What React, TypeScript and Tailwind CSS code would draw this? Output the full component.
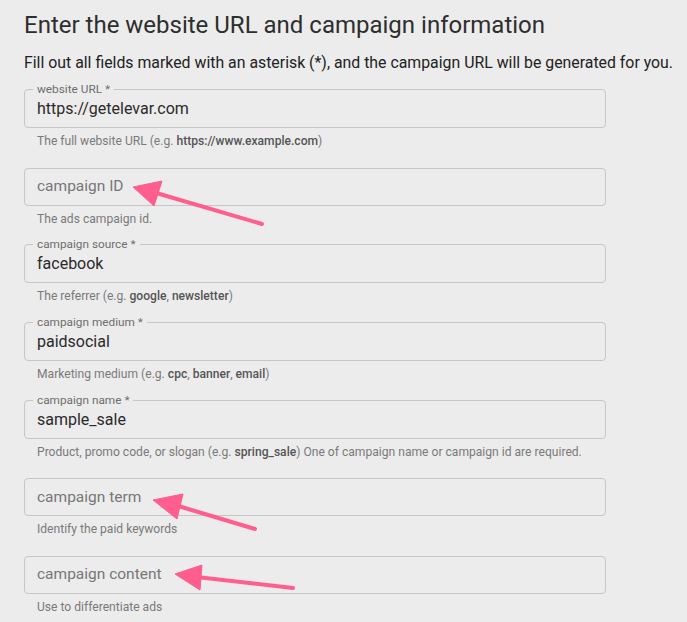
import React from 'react';

type Field = {
  label: string;
  value?: string;
  required?: boolean;
  help: React.ReactNode;
};

const B = ({ children }: { children: React.ReactNode }) => (
  <span className="font-medium text-[#555]">{children}</span>
);

const fields: Field[] = [
  {
    label: 'website URL',
    value: 'https://getelevar.com',
    required: true,
    help: (
      <>
        The full website URL (e.g. <B>https://www.example.com</B>)
      </>
    ),
  },
  { label: 'campaign ID', help: 'The ads campaign id.' },
  {
    label: 'campaign source',
    value: 'facebook',
    required: true,
    help: (
      <>
        The referrer (e.g. <B>google</B>, <B>newsletter</B>)
      </>
    ),
  },
  {
    label: 'campaign medium',
    value: 'paidsocial',
    required: true,
    help: (
      <>
        Marketing medium (e.g. <B>cpc</B>, <B>banner</B>, <B>email</B>)
      </>
    ),
  },
  {
    label: 'campaign name',
    value: 'sample_sale',
    required: true,
    help: (
      <>
        Product, promo code, or slogan (e.g. <B>spring_sale</B>) One of campaign name or campaign id are required.
      </>
    ),
  },
  { label: 'campaign term', help: 'Identify the paid keywords' },
  { label: 'campaign content', help: 'Use to differentiate ads' },
];

function OutlinedField({ field }: { field: Field }) {
  const filled = !!field.value;
  return (
    <div className="flex flex-col">
      <div className="relative h-[38px] flex items-center pl-[13px]">
        {filled ? (
          <fieldset className="absolute inset-x-0 bottom-0 -top-[7px] border border-[#c6c6c6] rounded-[4px] px-[8px] pointer-events-none">
            <legend className="px-[4px] text-[11.8px] leading-[13px] text-[#6e6e6e]">
              {field.label} {field.required ? '*' : ''}
            </legend>
          </fieldset>
        ) : (
          <div className="absolute inset-0 border border-[#c6c6c6] rounded-[4px] pointer-events-none" />
        )}
        <span className={filled ? 'text-[16px] text-[#2a2a2a]' : 'text-[15.5px] text-[#777]'}>
          {filled ? field.value : field.label}
        </span>
      </div>
      <p className="mt-[6px] pl-[13px] text-[12.1px] leading-[15px] text-[#7a7a7a] whitespace-nowrap">{field.help}</p>
    </div>
  );
}

function Arrow({ tip, a, b, tail }: { tip: [number, number]; a: [number, number]; b: [number, number]; tail: [number, number] }) {
  const mx = (a[0] + b[0]) / 2;
  const my = (a[1] + b[1]) / 2;
  return (
    <g fill="#ff5e8e" stroke="#ff5e8e">
      <line x1={mx} y1={my} x2={tail[0]} y2={tail[1]} strokeWidth={4} strokeLinecap="round" />
      <polygon points={`${tip[0]},${tip[1]} ${a[0]},${a[1]} ${b[0]},${b[1]}`} strokeWidth={1} strokeLinejoin="round" />
    </g>
  );
}

export default function App() {
  return (
    <div className="relative w-[687px] h-[622px] overflow-hidden bg-[#ececec] font-['Roboto',sans-serif]">
      <div className="px-[24px] pt-[8px]">
        <h1 className="text-[24px] leading-[34px] text-[#2e2e2e] font-normal whitespace-nowrap">
          Enter the website URL and campaign information
        </h1>
        <p className="mt-[11px] text-[15.85px] leading-[20px] text-[#222] whitespace-nowrap">
          Fill out all fields marked with an asterisk (*), and the campaign URL will be generated for you.
        </p>
        <div className="mt-[17px] w-[582px] flex flex-col gap-[18.67px]">
          {fields.map((f) => (
            <OutlinedField key={f.label} field={f} />
          ))}
        </div>
      </div>
      <svg className="absolute inset-0 pointer-events-none" width={687} height={622}>
        <Arrow tip={[133, 187]} a={[162, 181]} b={[154, 206]} tail={[262, 224]} />
        <Arrow tip={[153, 500]} a={[183, 494]} b={[177, 519]} tail={[255, 529]} />
        <Arrow tip={[175, 574]} a={[202, 565]} b={[200, 590]} tail={[293, 588]} />
      </svg>
    </div>
  );
}
